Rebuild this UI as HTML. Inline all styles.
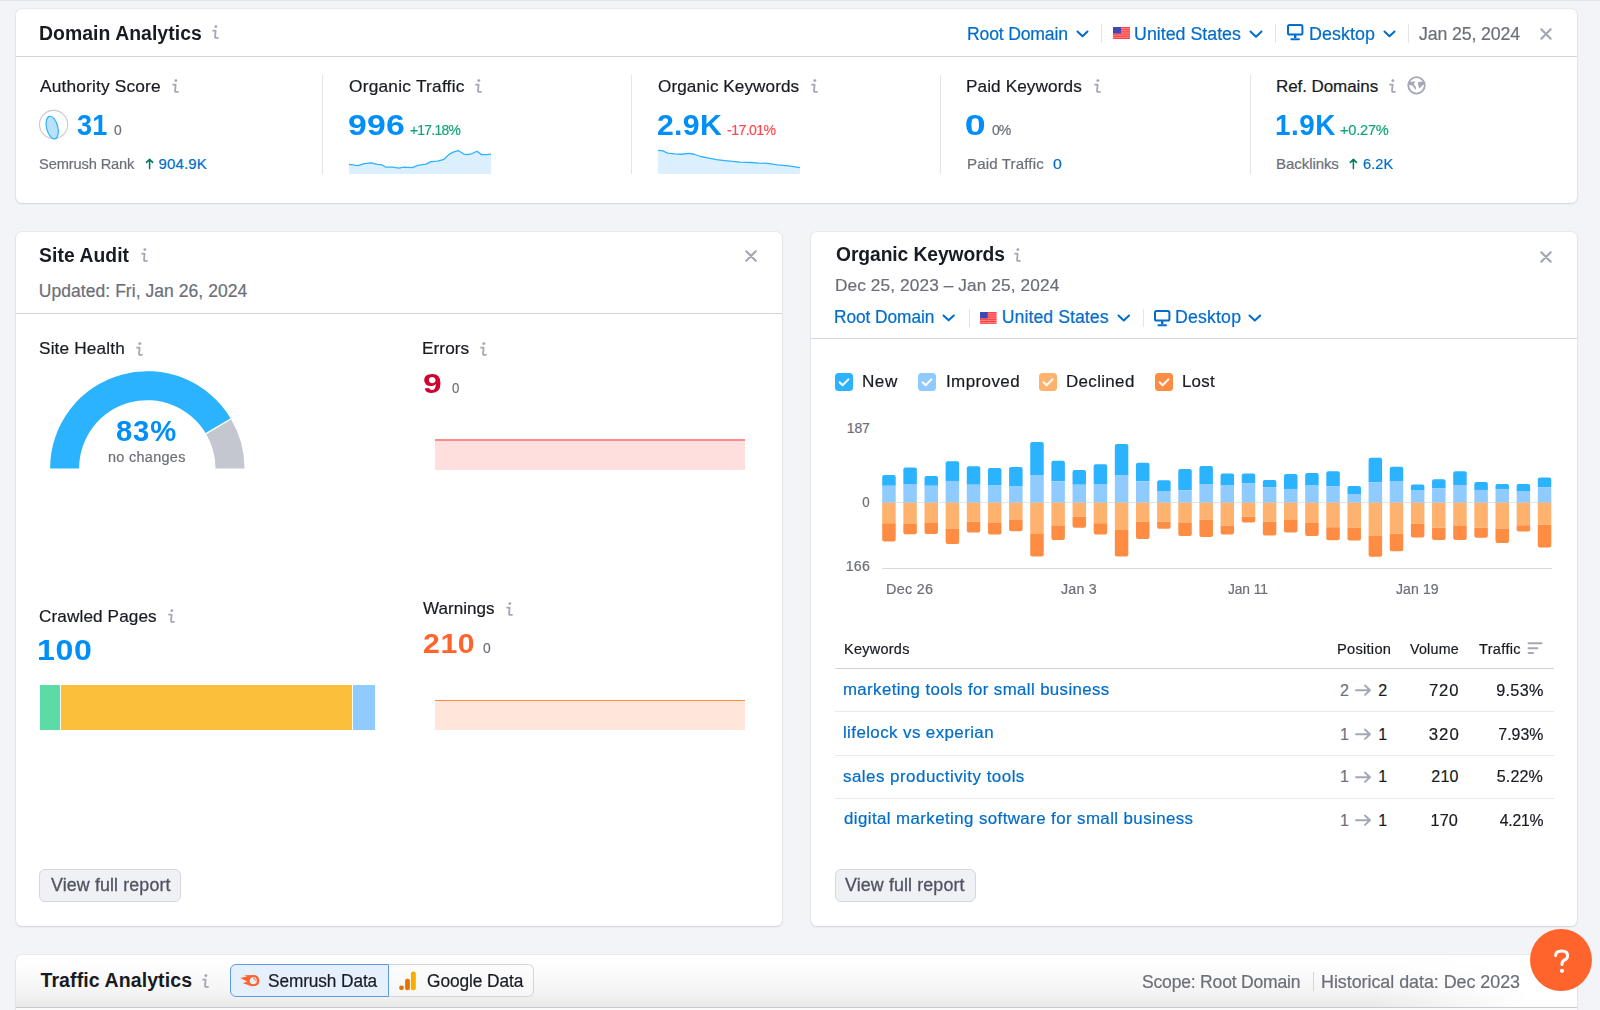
<!DOCTYPE html>
<html><head><meta charset="utf-8"><style>
html,body{margin:0;padding:0;}
body{width:1600px;height:1010px;overflow:hidden;background:#f3f4f8;position:relative;font-family:"Liberation Sans",sans-serif;}
.t{position:absolute;white-space:pre;line-height:40px;-webkit-text-stroke:0.2px currentColor;}
.t[style*=bold]{-webkit-text-stroke:0;}
.a{position:absolute;}
.card{position:absolute;background:#fff;border-radius:6px;box-shadow:0 0 0 1px rgba(30,35,60,0.04),0 1px 2px rgba(30,35,60,0.12);}
.hl{position:absolute;height:1px;background:#d6d8df;}
.vl{position:absolute;width:1px;background:#e3e4ea;}
svg{position:absolute;overflow:visible;}
</style></head><body>
<div class="a" style="left:0;top:0;width:1600px;height:1px;background:#e2e3e8"></div>
<div class="card" style="left:16px;top:9px;width:1561px;height:194px;"></div>
<div class="card" style="left:16px;top:232px;width:766px;height:694px;"></div>
<div class="card" style="left:811px;top:232px;width:766px;height:694px;"></div>
<div class="card" style="left:16px;top:955px;width:1561px;height:55px;border-radius:6px 6px 0 0;"></div>
<div class="a" style="left:16px;top:955px;width:1561px;height:52px;border-radius:6px 6px 0 0;background:linear-gradient(rgba(0,0,0,0) 0%,rgba(0,0,0,0.008) 25%,rgba(0,0,0,0.045) 70%,rgba(0,0,0,0.085) 100%);-webkit-mask-image:linear-gradient(to right,#000 0%,#000 87%,transparent 97%);"></div>
<div class="a" style="left:16px;top:1007px;width:1561px;height:1px;background:#c9cad1"></div>
<div class="a" style="left:16px;top:1008px;width:1561px;height:2px;background:#fbfbfc"></div>
<div class="hl" style="left:16px;width:1561px;top:56px;height:1px;background:#d3d5dc"></div>
<svg style="left:211px;top:24px" width="10" height="16" viewBox="0 0 10 16"><circle cx="4.85" cy="2.6" r="1.45" fill="#a4a7b5"/><path d="M2.1 6.7H4.6L4.05 12.8Q4.0 13.8 4.9 13.8H7.0" fill="none" stroke="#a4a7b5" stroke-width="1.8" stroke-linecap="round" stroke-linejoin="round"/></svg>
<svg style="left:1075px;top:28.75px" width="15" height="9.5"><path d="M2.5 2.5L7.5 7.2L12.5 2.5" fill="none" stroke="#006dca" stroke-width="2" stroke-linecap="round" stroke-linejoin="round"/></svg>
<div class="vl" style="left:1101px;top:24px;height:19px;background:#e3e4ea"></div>
<svg style="left:1113px;top:27px" width="17" height="12"><rect width="17" height="12" fill="#ff8a8a"/><rect x="0" y="0.00" width="17" height="0.92" fill="#ff3b3b"/><rect x="0" y="1.85" width="17" height="0.92" fill="#ff3b3b"/><rect x="0" y="3.69" width="17" height="0.92" fill="#ff3b3b"/><rect x="0" y="5.54" width="17" height="0.92" fill="#ff3b3b"/><rect x="0" y="7.38" width="17" height="0.92" fill="#ff3b3b"/><rect x="0" y="9.23" width="17" height="0.92" fill="#ff3b3b"/><rect x="0" y="11.08" width="17" height="0.92" fill="#ff3b3b"/><rect width="7.99" height="6.48" fill="#4048b8"/></svg>
<svg style="left:1248px;top:28.5px" width="16" height="10.0"><path d="M2.5 2.5L8.0 7.7L13.5 2.5" fill="none" stroke="#006dca" stroke-width="2" stroke-linecap="round" stroke-linejoin="round"/></svg>
<div class="vl" style="left:1275px;top:24px;height:19px;background:#e3e4ea"></div>
<svg style="left:1287px;top:24px" width="17" height="17" viewBox="0 0 17 17"><rect x="1" y="1" width="14.4" height="9.6" rx="1.6" fill="none" stroke="#006dca" stroke-width="2"/><rect x="7" y="11" width="2.4" height="3" fill="#006dca"/><path d="M4.4 15.2H12" stroke="#006dca" stroke-width="1.9" stroke-linecap="round"/></svg>
<svg style="left:1382px;top:28.75px" width="15" height="9.5"><path d="M2.5 2.5L7.5 7.2L12.5 2.5" fill="none" stroke="#006dca" stroke-width="2" stroke-linecap="round" stroke-linejoin="round"/></svg>
<div class="vl" style="left:1408px;top:24px;height:19px;background:#e3e4ea"></div>
<svg style="left:1539px;top:26.5px" width="14" height="14"><path d="M2.3 2.3L11.7 11.7M11.7 2.3L2.3 11.7" stroke="#a4a7b5" stroke-width="2.2" stroke-linecap="round"/></svg>
<div class="vl" style="left:322px;top:75px;height:99px;background:#e3e4ea"></div>
<div class="vl" style="left:631px;top:75px;height:99px;background:#e3e4ea"></div>
<div class="vl" style="left:940px;top:75px;height:99px;background:#e3e4ea"></div>
<div class="vl" style="left:1250px;top:75px;height:99px;background:#e3e4ea"></div>
<svg style="left:170.6px;top:78px" width="10" height="16" viewBox="0 0 10 16"><circle cx="4.85" cy="2.6" r="1.45" fill="#a4a7b5"/><path d="M2.1 6.7H4.6L4.05 12.8Q4.0 13.8 4.9 13.8H7.0" fill="none" stroke="#a4a7b5" stroke-width="1.8" stroke-linecap="round" stroke-linejoin="round"/></svg>
<svg style="left:474px;top:78px" width="10" height="16" viewBox="0 0 10 16"><circle cx="4.85" cy="2.6" r="1.45" fill="#a4a7b5"/><path d="M2.1 6.7H4.6L4.05 12.8Q4.0 13.8 4.9 13.8H7.0" fill="none" stroke="#a4a7b5" stroke-width="1.8" stroke-linecap="round" stroke-linejoin="round"/></svg>
<svg style="left:810px;top:78px" width="10" height="16" viewBox="0 0 10 16"><circle cx="4.85" cy="2.6" r="1.45" fill="#a4a7b5"/><path d="M2.1 6.7H4.6L4.05 12.8Q4.0 13.8 4.9 13.8H7.0" fill="none" stroke="#a4a7b5" stroke-width="1.8" stroke-linecap="round" stroke-linejoin="round"/></svg>
<svg style="left:1092.5px;top:78px" width="10" height="16" viewBox="0 0 10 16"><circle cx="4.85" cy="2.6" r="1.45" fill="#a4a7b5"/><path d="M2.1 6.7H4.6L4.05 12.8Q4.0 13.8 4.9 13.8H7.0" fill="none" stroke="#a4a7b5" stroke-width="1.8" stroke-linecap="round" stroke-linejoin="round"/></svg>
<svg style="left:1388.4px;top:78px" width="10" height="16" viewBox="0 0 10 16"><circle cx="4.85" cy="2.6" r="1.45" fill="#a4a7b5"/><path d="M2.1 6.7H4.6L4.05 12.8Q4.0 13.8 4.9 13.8H7.0" fill="none" stroke="#a4a7b5" stroke-width="1.8" stroke-linecap="round" stroke-linejoin="round"/></svg>
<svg style="left:38px;top:109px" width="32" height="32" viewBox="0 0 32 32"><circle cx="15.6" cy="15.5" r="14.1" fill="none" stroke="#c8cad2" stroke-width="1.1"/><ellipse cx="14.2" cy="18.6" rx="5.6" ry="11.6" transform="rotate(-14 14.2 18.6)" fill="#b9e1fd" stroke="#2bb3ff" stroke-width="1.2"/></svg>
<svg style="left:1406px;top:75px" width="21" height="21" viewBox="0 0 21 21"><circle cx="10.5" cy="10.35" r="8.25" fill="none" stroke="#a4a7b5" stroke-width="1.8"/><path d="M2.5 6.9L9.6 6.2Q7.3 8.8 8.3 10.1Q10.9 12.4 9.6 15Q7.8 12.4 6.3 10.6Q4.7 9.7 2.5 10Z" fill="#a4a7b5"/><path d="M12.2 6.9L18.6 6.2L18.9 9.3Q17.2 9.4 15.8 10.9Q14.6 12.2 13.7 13.2Q11.6 11.2 12.2 6.9Z" fill="#a4a7b5"/></svg>
<svg style="left:0;top:0" width="1600" height="1010"><path d="M149.6 168.6V159.8M146.5 162.4L149.6 159.4L152.7 162.4" fill="none" stroke="#047a5f" stroke-width="1.55" stroke-linecap="round" stroke-linejoin="round"/></svg>
<svg style="left:0;top:0" width="1600" height="1010"><path d="M1353.4 168.6V159.8M1350.3000000000002 162.4L1353.4 159.4L1356.5 162.4" fill="none" stroke="#047a5f" stroke-width="1.55" stroke-linecap="round" stroke-linejoin="round"/></svg>
<svg style="left:0;top:0" width="1600" height="1010"><path d="M349.00 164.38 L357.81 165.69 L364.38 163.63 L370.94 162.88 L377.50 164.38 L382.19 164.94 L385.94 167.19 L392.50 167.19 L399.07 168.13 L403.75 167.19 L412.19 167.57 L417.82 165.32 L426.26 164.19 L430.94 161.57 L437.51 161.19 L444.07 159.32 L448.76 154.63 L452.51 152.38 L458.13 150.51 L463.76 154.07 L467.51 154.63 L472.20 153.51 L476.88 151.26 L481.57 154.63 L486.26 154.63 L490.95 154.07 L490.95 174 L349.00 174 Z" fill="#dcefff"/><path d="M349.00 164.38 L357.81 165.69 L364.38 163.63 L370.94 162.88 L377.50 164.38 L382.19 164.94 L385.94 167.19 L392.50 167.19 L399.07 168.13 L403.75 167.19 L412.19 167.57 L417.82 165.32 L426.26 164.19 L430.94 161.57 L437.51 161.19 L444.07 159.32 L448.76 154.63 L452.51 152.38 L458.13 150.51 L463.76 154.07 L467.51 154.63 L472.20 153.51 L476.88 151.26 L481.57 154.63 L486.26 154.63 L490.95 154.07" fill="none" stroke="#2bb3ff" stroke-width="1.3" stroke-linejoin="round"/></svg>
<svg style="left:0;top:0" width="1600" height="1010"><path d="M657.88 150.32 L662.19 150.69 L667.81 153.13 L674.38 153.88 L680.94 154.26 L689.38 153.32 L694.07 154.26 L700.63 156.51 L706.25 157.63 L716.57 159.69 L725.00 160.63 L740.01 162.13 L751.26 162.51 L758.76 163.07 L767.19 163.44 L777.51 164.94 L788.76 165.88 L800.01 167.57 L800.01 174 L657.88 174 Z" fill="#dcefff"/><path d="M657.88 150.32 L662.19 150.69 L667.81 153.13 L674.38 153.88 L680.94 154.26 L689.38 153.32 L694.07 154.26 L700.63 156.51 L706.25 157.63 L716.57 159.69 L725.00 160.63 L740.01 162.13 L751.26 162.51 L758.76 163.07 L767.19 163.44 L777.51 164.94 L788.76 165.88 L800.01 167.57" fill="none" stroke="#2bb3ff" stroke-width="1.3" stroke-linejoin="round"/></svg>
<svg style="left:140px;top:247px" width="10" height="16" viewBox="0 0 10 16"><circle cx="4.85" cy="2.6" r="1.45" fill="#a4a7b5"/><path d="M2.1 6.7H4.6L4.05 12.8Q4.0 13.8 4.9 13.8H7.0" fill="none" stroke="#a4a7b5" stroke-width="1.8" stroke-linecap="round" stroke-linejoin="round"/></svg>
<svg style="left:743.6px;top:249.2px" width="14" height="14"><path d="M2.3 2.3L11.7 11.7M11.7 2.3L2.3 11.7" stroke="#a4a7b5" stroke-width="2.2" stroke-linecap="round"/></svg>
<div class="hl" style="left:16px;width:766px;top:313px;height:1px;background:#d3d5dc"></div>
<svg style="left:134.7px;top:341px" width="10" height="16" viewBox="0 0 10 16"><circle cx="4.85" cy="2.6" r="1.45" fill="#a4a7b5"/><path d="M2.1 6.7H4.6L4.05 12.8Q4.0 13.8 4.9 13.8H7.0" fill="none" stroke="#a4a7b5" stroke-width="1.8" stroke-linecap="round" stroke-linejoin="round"/></svg>
<svg style="left:479.2px;top:341px" width="10" height="16" viewBox="0 0 10 16"><circle cx="4.85" cy="2.6" r="1.45" fill="#a4a7b5"/><path d="M2.1 6.7H4.6L4.05 12.8Q4.0 13.8 4.9 13.8H7.0" fill="none" stroke="#a4a7b5" stroke-width="1.8" stroke-linecap="round" stroke-linejoin="round"/></svg>
<svg style="left:0;top:0" width="1600" height="1010"><path d="M50.10 468.40 A97.2 97.2 0 0 1 230.96 418.92 L206.00 433.68 A68.2 68.2 0 0 0 79.10 468.40 Z" fill="#2bb3ff"/><path d="M230.96 418.92 A97.2 97.2 0 0 1 244.50 468.40 L215.50 468.40 A68.2 68.2 0 0 0 206.00 433.68 Z" fill="#c4c7cf"/><path d="M204.28 434.70 L232.69 417.90" stroke="#fff" stroke-width="1.4"/></svg>
<div class="a" style="left:435px;top:440px;width:310px;height:30px;background:#ffdede"></div>
<div class="a" style="left:435px;top:439px;width:310px;height:2px;background:#ff8a8a"></div>
<svg style="left:166.7px;top:608px" width="10" height="16" viewBox="0 0 10 16"><circle cx="4.85" cy="2.6" r="1.45" fill="#a4a7b5"/><path d="M2.1 6.7H4.6L4.05 12.8Q4.0 13.8 4.9 13.8H7.0" fill="none" stroke="#a4a7b5" stroke-width="1.8" stroke-linecap="round" stroke-linejoin="round"/></svg>
<svg style="left:505.3px;top:601px" width="10" height="16" viewBox="0 0 10 16"><circle cx="4.85" cy="2.6" r="1.45" fill="#a4a7b5"/><path d="M2.1 6.7H4.6L4.05 12.8Q4.0 13.8 4.9 13.8H7.0" fill="none" stroke="#a4a7b5" stroke-width="1.8" stroke-linecap="round" stroke-linejoin="round"/></svg>
<div class="a" style="left:39.5px;top:685px;width:20.3px;height:45px;background:#5bdba6"></div>
<div class="a" style="left:60.5px;top:685px;width:291.5px;height:45px;background:#fcbf3c"></div>
<div class="a" style="left:353px;top:685px;width:22px;height:45px;background:#8fcbff"></div>
<div class="a" style="left:435px;top:701px;width:310px;height:29px;background:#ffe5da"></div>
<div class="a" style="left:435px;top:700px;width:310px;height:1.3px;background:#ff8c43"></div>
<div class="a" style="left:39.4px;top:869.4px;width:139.2px;height:30.899999999999977px;background:#f0f1f5;border:1px solid #d5d7de;border-radius:6px"></div>
<svg style="left:1013px;top:247px" width="10" height="16" viewBox="0 0 10 16"><circle cx="4.85" cy="2.6" r="1.45" fill="#a4a7b5"/><path d="M2.1 6.7H4.6L4.05 12.8Q4.0 13.8 4.9 13.8H7.0" fill="none" stroke="#a4a7b5" stroke-width="1.8" stroke-linecap="round" stroke-linejoin="round"/></svg>
<svg style="left:1539px;top:249.5px" width="14" height="14"><path d="M2.3 2.3L11.7 11.7M11.7 2.3L2.3 11.7" stroke="#a4a7b5" stroke-width="2.2" stroke-linecap="round"/></svg>
<svg style="left:941.3px;top:313.475px" width="15.300000000000068" height="9.650000000000034"><path d="M2.5 2.5L7.650000000000034 7.350000000000034L12.800000000000068 2.5" fill="none" stroke="#006dca" stroke-width="2" stroke-linecap="round" stroke-linejoin="round"/></svg>
<div class="vl" style="left:968.5px;top:309px;height:18px;background:#e3e4ea"></div>
<svg style="left:979.7px;top:312px" width="16.5" height="11.7"><rect width="16.5" height="11.7" fill="#ff8a8a"/><rect x="0" y="0.00" width="16.5" height="0.90" fill="#ff3b3b"/><rect x="0" y="1.80" width="16.5" height="0.90" fill="#ff3b3b"/><rect x="0" y="3.60" width="16.5" height="0.90" fill="#ff3b3b"/><rect x="0" y="5.40" width="16.5" height="0.90" fill="#ff3b3b"/><rect x="0" y="7.20" width="16.5" height="0.90" fill="#ff3b3b"/><rect x="0" y="9.00" width="16.5" height="0.90" fill="#ff3b3b"/><rect x="0" y="10.80" width="16.5" height="0.90" fill="#ff3b3b"/><rect width="7.75" height="6.32" fill="#4048b8"/></svg>
<svg style="left:1115.6px;top:313.4px" width="15.600000000000136" height="9.800000000000068"><path d="M2.5 2.5L7.800000000000068 7.500000000000068L13.100000000000136 2.5" fill="none" stroke="#006dca" stroke-width="2" stroke-linecap="round" stroke-linejoin="round"/></svg>
<div class="vl" style="left:1142.5px;top:309px;height:18px;background:#e3e4ea"></div>
<svg style="left:1153.5px;top:309.5px" width="17" height="17" viewBox="0 0 17 17"><rect x="1" y="1" width="14.4" height="9.6" rx="1.6" fill="none" stroke="#006dca" stroke-width="2"/><rect x="7" y="11" width="2.4" height="3" fill="#006dca"/><path d="M4.4 15.2H12" stroke="#006dca" stroke-width="1.9" stroke-linecap="round"/></svg>
<svg style="left:1247.4px;top:313.37500000000006px" width="15.699999999999818" height="9.849999999999909"><path d="M2.5 2.5L7.849999999999909 7.549999999999909L13.199999999999818 2.5" fill="none" stroke="#006dca" stroke-width="2" stroke-linecap="round" stroke-linejoin="round"/></svg>
<div class="hl" style="left:811px;width:766px;top:338px;height:1px;background:#d3d5dc"></div>
<svg style="left:835px;top:373px" width="18" height="18"><rect x="0" y="0" width="18" height="18" rx="3.5" fill="#2bb3ff"/><path d="M4.6 9.3L7.6 12.2L13.4 6.4" fill="none" stroke="#fff" stroke-width="2" stroke-linecap="round" stroke-linejoin="round"/></svg>
<svg style="left:918px;top:373px" width="18" height="18"><rect x="0" y="0" width="18" height="18" rx="3.5" fill="#8fcbff"/><path d="M4.6 9.3L7.6 12.2L13.4 6.4" fill="none" stroke="#fff" stroke-width="2" stroke-linecap="round" stroke-linejoin="round"/></svg>
<svg style="left:1038.5px;top:373px" width="18" height="18"><rect x="0" y="0" width="18" height="18" rx="3.5" fill="#ffb26e"/><path d="M4.6 9.3L7.6 12.2L13.4 6.4" fill="none" stroke="#fff" stroke-width="2" stroke-linecap="round" stroke-linejoin="round"/></svg>
<svg style="left:1154.5px;top:373px" width="18" height="18"><rect x="0" y="0" width="18" height="18" rx="3.5" fill="#ff8c43"/><path d="M4.6 9.3L7.6 12.2L13.4 6.4" fill="none" stroke="#fff" stroke-width="2" stroke-linecap="round" stroke-linejoin="round"/></svg>
<div class="hl" style="left:882px;width:669.5px;top:502px;height:1.3px;background:#e4e5ea"></div>
<div class="hl" style="left:882px;width:669.5px;top:567.5px;height:1.5px;background:#d9dae1"></div>
<svg style="left:0;top:0" width="1600" height="1010"><path d="M882.20 485.80V477.00Q882.20 475.00 884.20 475.00H893.70Q895.70 475.00 895.70 477.00V485.80Z" fill="#2bb3ff"/><rect x="882.20" y="485.80" width="13.5" height="16.90" fill="#8fcbff"/><rect x="882.20" y="502.70" width="13.5" height="20.60" fill="#ffb26e"/><path d="M882.20 523.30V539.50Q882.20 541.50 884.20 541.50H893.70Q895.70 541.50 895.70 539.50V523.30Z" fill="#ff8c43"/><path d="M903.35 484.00V469.40Q903.35 467.40 905.35 467.40H914.85Q916.85 467.40 916.85 469.40V484.00Z" fill="#2bb3ff"/><rect x="903.35" y="484.00" width="13.5" height="18.70" fill="#8fcbff"/><rect x="903.35" y="502.70" width="13.5" height="21.10" fill="#ffb26e"/><path d="M903.35 523.80V532.20Q903.35 534.20 905.35 534.20H914.85Q916.85 534.20 916.85 532.20V523.80Z" fill="#ff8c43"/><path d="M924.50 485.80V478.00Q924.50 476.00 926.50 476.00H936.00Q938.00 476.00 938.00 478.00V485.80Z" fill="#2bb3ff"/><rect x="924.50" y="485.80" width="13.5" height="16.90" fill="#8fcbff"/><rect x="924.50" y="502.70" width="13.5" height="19.90" fill="#ffb26e"/><path d="M924.50 522.60V531.90Q924.50 533.90 926.50 533.90H936.00Q938.00 533.90 938.00 531.90V522.60Z" fill="#ff8c43"/><path d="M945.64 480.90V463.20Q945.64 461.20 947.64 461.20H957.14Q959.14 461.20 959.14 463.20V480.90Z" fill="#2bb3ff"/><rect x="945.64" y="480.90" width="13.5" height="21.80" fill="#8fcbff"/><rect x="945.64" y="502.70" width="13.5" height="26.10" fill="#ffb26e"/><path d="M945.64 528.80V541.90Q945.64 543.90 947.64 543.90H957.14Q959.14 543.90 959.14 541.90V528.80Z" fill="#ff8c43"/><path d="M966.79 484.70V468.30Q966.79 466.30 968.79 466.30H978.29Q980.29 466.30 980.29 468.30V484.70Z" fill="#2bb3ff"/><rect x="966.79" y="484.70" width="13.5" height="18.00" fill="#8fcbff"/><rect x="966.79" y="502.70" width="13.5" height="19.00" fill="#ffb26e"/><path d="M966.79 521.70V530.50Q966.79 532.50 968.79 532.50H978.29Q980.29 532.50 980.29 530.50V521.70Z" fill="#ff8c43"/><path d="M987.94 485.10V470.10Q987.94 468.10 989.94 468.10H999.44Q1001.44 468.10 1001.44 470.10V485.10Z" fill="#2bb3ff"/><rect x="987.94" y="485.10" width="13.5" height="17.60" fill="#8fcbff"/><rect x="987.94" y="502.70" width="13.5" height="20.10" fill="#ffb26e"/><path d="M987.94 522.80V532.60Q987.94 534.60 989.94 534.60H999.44Q1001.44 534.60 1001.44 532.60V522.80Z" fill="#ff8c43"/><path d="M1009.09 486.50V469.00Q1009.09 467.00 1011.09 467.00H1020.59Q1022.59 467.00 1022.59 469.00V486.50Z" fill="#2bb3ff"/><rect x="1009.09" y="486.50" width="13.5" height="16.20" fill="#8fcbff"/><rect x="1009.09" y="502.70" width="13.5" height="17.10" fill="#ffb26e"/><path d="M1009.09 519.80V529.20Q1009.09 531.20 1011.09 531.20H1020.59Q1022.59 531.20 1022.59 529.20V519.80Z" fill="#ff8c43"/><path d="M1030.24 475.40V444.00Q1030.24 442.00 1032.24 442.00H1041.74Q1043.74 442.00 1043.74 444.00V475.40Z" fill="#2bb3ff"/><rect x="1030.24" y="475.40" width="13.5" height="27.30" fill="#8fcbff"/><rect x="1030.24" y="502.70" width="13.5" height="30.90" fill="#ffb26e"/><path d="M1030.24 533.60V554.40Q1030.24 556.40 1032.24 556.40H1041.74Q1043.74 556.40 1043.74 554.40V533.60Z" fill="#ff8c43"/><path d="M1051.38 481.30V462.80Q1051.38 460.80 1053.38 460.80H1062.88Q1064.88 460.80 1064.88 462.80V481.30Z" fill="#2bb3ff"/><rect x="1051.38" y="481.30" width="13.5" height="21.40" fill="#8fcbff"/><rect x="1051.38" y="502.70" width="13.5" height="22.90" fill="#ffb26e"/><path d="M1051.38 525.60V537.90Q1051.38 539.90 1053.38 539.90H1062.88Q1064.88 539.90 1064.88 537.90V525.60Z" fill="#ff8c43"/><path d="M1072.53 484.70V471.90Q1072.53 469.90 1074.53 469.90H1084.03Q1086.03 469.90 1086.03 471.90V484.70Z" fill="#2bb3ff"/><rect x="1072.53" y="484.70" width="13.5" height="18.00" fill="#8fcbff"/><rect x="1072.53" y="502.70" width="13.5" height="14.20" fill="#ffb26e"/><path d="M1072.53 516.90V525.70Q1072.53 527.70 1074.53 527.70H1084.03Q1086.03 527.70 1086.03 525.70V516.90Z" fill="#ff8c43"/><path d="M1093.68 484.00V466.20Q1093.68 464.20 1095.68 464.20H1105.18Q1107.18 464.20 1107.18 466.20V484.00Z" fill="#2bb3ff"/><rect x="1093.68" y="484.00" width="13.5" height="18.70" fill="#8fcbff"/><rect x="1093.68" y="502.70" width="13.5" height="20.60" fill="#ffb26e"/><path d="M1093.68 523.30V532.60Q1093.68 534.60 1095.68 534.60H1105.18Q1107.18 534.60 1107.18 532.60V523.30Z" fill="#ff8c43"/><path d="M1114.83 475.40V445.90Q1114.83 443.90 1116.83 443.90H1126.33Q1128.33 443.90 1128.33 445.90V475.40Z" fill="#2bb3ff"/><rect x="1114.83" y="475.40" width="13.5" height="27.30" fill="#8fcbff"/><rect x="1114.83" y="502.70" width="13.5" height="27.30" fill="#ffb26e"/><path d="M1114.83 530.00V554.40Q1114.83 556.40 1116.83 556.40H1126.33Q1128.33 556.40 1128.33 554.40V530.00Z" fill="#ff8c43"/><path d="M1135.98 481.30V464.80Q1135.98 462.80 1137.98 462.80H1147.48Q1149.48 462.80 1149.48 464.80V481.30Z" fill="#2bb3ff"/><rect x="1135.98" y="481.30" width="13.5" height="21.40" fill="#8fcbff"/><rect x="1135.98" y="502.70" width="13.5" height="19.20" fill="#ffb26e"/><path d="M1135.98 521.90V537.00Q1135.98 539.00 1137.98 539.00H1147.48Q1149.48 539.00 1149.48 537.00V521.90Z" fill="#ff8c43"/><path d="M1157.12 491.00V482.30Q1157.12 480.30 1159.12 480.30H1168.62Q1170.62 480.30 1170.62 482.30V491.00Z" fill="#2bb3ff"/><rect x="1157.12" y="491.00" width="13.5" height="11.70" fill="#8fcbff"/><rect x="1157.12" y="502.70" width="13.5" height="19.00" fill="#ffb26e"/><path d="M1157.12 521.70V526.70Q1157.12 528.70 1159.12 528.70H1168.62Q1170.62 528.70 1170.62 526.70V521.70Z" fill="#ff8c43"/><path d="M1178.27 490.30V471.10Q1178.27 469.10 1180.27 469.10H1189.77Q1191.77 469.10 1191.77 471.10V490.30Z" fill="#2bb3ff"/><rect x="1178.27" y="490.30" width="13.5" height="12.40" fill="#8fcbff"/><rect x="1178.27" y="502.70" width="13.5" height="20.40" fill="#ffb26e"/><path d="M1178.27 523.10V534.00Q1178.27 536.00 1180.27 536.00H1189.77Q1191.77 536.00 1191.77 534.00V523.10Z" fill="#ff8c43"/><path d="M1199.42 484.00V468.00Q1199.42 466.00 1201.42 466.00H1210.92Q1212.92 466.00 1212.92 468.00V484.00Z" fill="#2bb3ff"/><rect x="1199.42" y="484.00" width="13.5" height="18.70" fill="#8fcbff"/><rect x="1199.42" y="502.70" width="13.5" height="16.70" fill="#ffb26e"/><path d="M1199.42 519.40V535.00Q1199.42 537.00 1201.42 537.00H1210.92Q1212.92 537.00 1212.92 535.00V519.40Z" fill="#ff8c43"/><path d="M1220.57 485.40V475.40Q1220.57 473.40 1222.57 473.40H1232.07Q1234.07 473.40 1234.07 475.40V485.40Z" fill="#2bb3ff"/><rect x="1220.57" y="485.40" width="13.5" height="17.30" fill="#8fcbff"/><rect x="1220.57" y="502.70" width="13.5" height="23.20" fill="#ffb26e"/><path d="M1220.57 525.90V532.60Q1220.57 534.60 1222.57 534.60H1232.07Q1234.07 534.60 1234.07 532.60V525.90Z" fill="#ff8c43"/><path d="M1241.72 483.10V475.40Q1241.72 473.40 1243.72 473.40H1253.22Q1255.22 473.40 1255.22 475.40V483.10Z" fill="#2bb3ff"/><rect x="1241.72" y="483.10" width="13.5" height="19.60" fill="#8fcbff"/><rect x="1241.72" y="502.70" width="13.5" height="14.20" fill="#ffb26e"/><path d="M1241.72 516.90V520.60Q1241.72 522.60 1243.72 522.60H1253.22Q1255.22 522.60 1255.22 520.60V516.90Z" fill="#ff8c43"/><path d="M1262.86 487.10V481.90Q1262.86 479.90 1264.86 479.90H1274.36Q1276.36 479.90 1276.36 481.90V487.10Z" fill="#2bb3ff"/><rect x="1262.86" y="487.10" width="13.5" height="15.60" fill="#8fcbff"/><rect x="1262.86" y="502.70" width="13.5" height="19.00" fill="#ffb26e"/><path d="M1262.86 521.70V533.60Q1262.86 535.60 1264.86 535.60H1274.36Q1276.36 535.60 1276.36 533.60V521.70Z" fill="#ff8c43"/><path d="M1284.01 488.90V475.90Q1284.01 473.90 1286.01 473.90H1295.51Q1297.51 473.90 1297.51 475.90V488.90Z" fill="#2bb3ff"/><rect x="1284.01" y="488.90" width="13.5" height="13.80" fill="#8fcbff"/><rect x="1284.01" y="502.70" width="13.5" height="17.40" fill="#ffb26e"/><path d="M1284.01 520.10V530.50Q1284.01 532.50 1286.01 532.50H1295.51Q1297.51 532.50 1297.51 530.50V520.10Z" fill="#ff8c43"/><path d="M1305.16 485.40V475.00Q1305.16 473.00 1307.16 473.00H1316.66Q1318.66 473.00 1318.66 475.00V485.40Z" fill="#2bb3ff"/><rect x="1305.16" y="485.40" width="13.5" height="17.30" fill="#8fcbff"/><rect x="1305.16" y="502.70" width="13.5" height="20.10" fill="#ffb26e"/><path d="M1305.16 522.80V534.00Q1305.16 536.00 1307.16 536.00H1316.66Q1318.66 536.00 1318.66 534.00V522.80Z" fill="#ff8c43"/><path d="M1326.31 486.10V473.30Q1326.31 471.30 1328.31 471.30H1337.81Q1339.81 471.30 1339.81 473.30V486.10Z" fill="#2bb3ff"/><rect x="1326.31" y="486.10" width="13.5" height="16.60" fill="#8fcbff"/><rect x="1326.31" y="502.70" width="13.5" height="24.60" fill="#ffb26e"/><path d="M1326.31 527.30V538.20Q1326.31 540.20 1328.31 540.20H1337.81Q1339.81 540.20 1339.81 538.20V527.30Z" fill="#ff8c43"/><path d="M1347.46 494.00V488.10Q1347.46 486.10 1349.46 486.10H1358.96Q1360.96 486.10 1360.96 488.10V494.00Z" fill="#2bb3ff"/><rect x="1347.46" y="494.00" width="13.5" height="8.70" fill="#8fcbff"/><rect x="1347.46" y="502.70" width="13.5" height="24.70" fill="#ffb26e"/><path d="M1347.46 527.40V538.40Q1347.46 540.40 1349.46 540.40H1358.96Q1360.96 540.40 1360.96 538.40V527.40Z" fill="#ff8c43"/><path d="M1368.60 482.20V459.70Q1368.60 457.70 1370.60 457.70H1380.10Q1382.10 457.70 1382.10 459.70V482.20Z" fill="#2bb3ff"/><rect x="1368.60" y="482.20" width="13.5" height="20.50" fill="#8fcbff"/><rect x="1368.60" y="502.70" width="13.5" height="33.30" fill="#ffb26e"/><path d="M1368.60 536.00V554.80Q1368.60 556.80 1370.60 556.80H1380.10Q1382.10 556.80 1382.10 554.80V536.00Z" fill="#ff8c43"/><path d="M1389.75 481.00V468.70Q1389.75 466.70 1391.75 466.70H1401.25Q1403.25 466.70 1403.25 468.70V481.00Z" fill="#2bb3ff"/><rect x="1389.75" y="481.00" width="13.5" height="21.70" fill="#8fcbff"/><rect x="1389.75" y="502.70" width="13.5" height="31.20" fill="#ffb26e"/><path d="M1389.75 533.90V549.20Q1389.75 551.20 1391.75 551.20H1401.25Q1403.25 551.20 1403.25 549.20V533.90Z" fill="#ff8c43"/><path d="M1410.90 490.00V486.50Q1410.90 484.50 1412.90 484.50H1422.40Q1424.40 484.50 1424.40 486.50V490.00Z" fill="#2bb3ff"/><rect x="1410.90" y="490.00" width="13.5" height="12.70" fill="#8fcbff"/><rect x="1410.90" y="502.70" width="13.5" height="21.20" fill="#ffb26e"/><path d="M1410.90 523.90V535.40Q1410.90 537.40 1412.90 537.40H1422.40Q1424.40 537.40 1424.40 535.40V523.90Z" fill="#ff8c43"/><path d="M1432.05 488.20V481.20Q1432.05 479.20 1434.05 479.20H1443.55Q1445.55 479.20 1445.55 481.20V488.20Z" fill="#2bb3ff"/><rect x="1432.05" y="488.20" width="13.5" height="14.50" fill="#8fcbff"/><rect x="1432.05" y="502.70" width="13.5" height="25.00" fill="#ffb26e"/><path d="M1432.05 527.70V537.90Q1432.05 539.90 1434.05 539.90H1443.55Q1445.55 539.90 1445.55 537.90V527.70Z" fill="#ff8c43"/><path d="M1453.20 485.00V473.30Q1453.20 471.30 1455.20 471.30H1464.70Q1466.70 471.30 1466.70 473.30V485.00Z" fill="#2bb3ff"/><rect x="1453.20" y="485.00" width="13.5" height="17.70" fill="#8fcbff"/><rect x="1453.20" y="502.70" width="13.5" height="23.30" fill="#ffb26e"/><path d="M1453.20 526.00V537.90Q1453.20 539.90 1455.20 539.90H1464.70Q1466.70 539.90 1466.70 537.90V526.00Z" fill="#ff8c43"/><path d="M1474.34 489.90V484.00Q1474.34 482.00 1476.34 482.00H1485.84Q1487.84 482.00 1487.84 484.00V489.90Z" fill="#2bb3ff"/><rect x="1474.34" y="489.90" width="13.5" height="12.80" fill="#8fcbff"/><rect x="1474.34" y="502.70" width="13.5" height="25.00" fill="#ffb26e"/><path d="M1474.34 527.70V535.80Q1474.34 537.80 1476.34 537.80H1485.84Q1487.84 537.80 1487.84 535.80V527.70Z" fill="#ff8c43"/><path d="M1495.49 488.90V486.00Q1495.49 484.00 1497.49 484.00H1506.99Q1508.99 484.00 1508.99 486.00V488.90Z" fill="#2bb3ff"/><rect x="1495.49" y="488.90" width="13.5" height="13.80" fill="#8fcbff"/><rect x="1495.49" y="502.70" width="13.5" height="26.10" fill="#ffb26e"/><path d="M1495.49 528.80V540.90Q1495.49 542.90 1497.49 542.90H1506.99Q1508.99 542.90 1508.99 540.90V528.80Z" fill="#ff8c43"/><path d="M1516.64 491.00V486.00Q1516.64 484.00 1518.64 484.00H1528.14Q1530.14 484.00 1530.14 486.00V491.00Z" fill="#2bb3ff"/><rect x="1516.64" y="491.00" width="13.5" height="11.70" fill="#8fcbff"/><rect x="1516.64" y="502.70" width="13.5" height="22.50" fill="#ffb26e"/><path d="M1516.64 525.20V529.40Q1516.64 531.40 1518.64 531.40H1528.14Q1530.14 531.40 1530.14 529.40V525.20Z" fill="#ff8c43"/><path d="M1537.79 487.10V479.40Q1537.79 477.40 1539.79 477.40H1549.29Q1551.29 477.40 1551.29 479.40V487.10Z" fill="#2bb3ff"/><rect x="1537.79" y="487.10" width="13.5" height="15.60" fill="#8fcbff"/><rect x="1537.79" y="502.70" width="13.5" height="22.20" fill="#ffb26e"/><path d="M1537.79 524.90V545.50Q1537.79 547.50 1539.79 547.50H1549.29Q1551.29 547.50 1551.29 545.50V524.90Z" fill="#ff8c43"/></svg>
<div class="hl" style="left:835px;width:718.5px;top:668px;height:1px;background:#d3d5dc"></div>
<div class="hl" style="left:835px;width:718.5px;top:711px;height:1px;background:#e9eaee"></div>
<div class="hl" style="left:835px;width:718.5px;top:755px;height:1px;background:#e9eaee"></div>
<div class="hl" style="left:835px;width:718.5px;top:798px;height:1px;background:#e9eaee"></div>
<svg style="left:1527px;top:642px" width="16" height="13"><path d="M1.5 1.3H14.5M1.5 6.2H10.5M1.5 11H6" stroke="#a4a7b5" stroke-width="1.9" stroke-linecap="round"/></svg>
<svg style="left:1355px;top:684.2px" width="17" height="12"><path d="M1 6.2H15M10 1.5L15 6.2L10 10.9" fill="none" stroke="#a4a7b5" stroke-width="1.9" stroke-linecap="round" stroke-linejoin="round"/></svg>
<svg style="left:1355px;top:727.7px" width="17" height="12"><path d="M1 6.2H15M10 1.5L15 6.2L10 10.9" fill="none" stroke="#a4a7b5" stroke-width="1.9" stroke-linecap="round" stroke-linejoin="round"/></svg>
<svg style="left:1355px;top:770.7px" width="17" height="12"><path d="M1 6.2H15M10 1.5L15 6.2L10 10.9" fill="none" stroke="#a4a7b5" stroke-width="1.9" stroke-linecap="round" stroke-linejoin="round"/></svg>
<svg style="left:1355px;top:813.7px" width="17" height="12"><path d="M1 6.2H15M10 1.5L15 6.2L10 10.9" fill="none" stroke="#a4a7b5" stroke-width="1.9" stroke-linecap="round" stroke-linejoin="round"/></svg>
<div class="a" style="left:835.25px;top:869.4px;width:139.0px;height:30.899999999999977px;background:#f0f1f5;border:1px solid #d5d7de;border-radius:6px"></div>
<svg style="left:201px;top:973px" width="10" height="16" viewBox="0 0 10 16"><circle cx="4.85" cy="2.6" r="1.45" fill="#a4a7b5"/><path d="M2.1 6.7H4.6L4.05 12.8Q4.0 13.8 4.9 13.8H7.0" fill="none" stroke="#a4a7b5" stroke-width="1.8" stroke-linecap="round" stroke-linejoin="round"/></svg>
<div class="a" style="left:389px;top:964px;width:143.6px;height:31px;border:1px solid #d3d5dc;border-left:none;border-radius:0 6px 6px 0;background:linear-gradient(#fdfdfd,#f6f6f7)"></div>
<div class="a" style="left:230px;top:964px;width:157px;height:31px;border:1px solid #5a9be3;border-radius:6px 0 0 6px;background:#e6f0fc"></div>
<svg style="left:239px;top:974px" width="22" height="14" viewBox="0 0 22 14"><path d="M5.2 1.2L15 0.95Q20.3 1.4 20.3 6.9Q20.1 12.2 14 12.3Q11 12.3 9.3 11L3.9 9.2L8.1 7.4L1.2 3.9L7.8 2.6Z" fill="#ff642d"/><circle cx="14.3" cy="6.8" r="3.5" fill="#e6f0fc"/><path d="M14.6 4.5Q16.3 4.8 16.8 6.3" stroke="#ff642d" stroke-width="1" fill="none" stroke-linecap="round"/></svg>
<svg style="left:398px;top:970px" width="20" height="22"><circle cx="3.5" cy="17.8" r="2.4" fill="#e37400"/><rect x="7.1" y="8.8" width="4.8" height="11.4" rx="2.2" fill="#e37400"/><rect x="12.9" y="1.5" width="4.9" height="18.7" rx="2.2" fill="#f9ab00"/></svg>
<div class="vl" style="left:1312.5px;top:972px;height:19px;background:#d3d5dc"></div>
<div class="a" style="left:1530px;top:928.5px;width:62px;height:62px;border-radius:50%;background:#ff642d"></div>
<svg style="left:1550px;top:947px" width="24" height="28"><path d="M5.6 8.6Q5.6 4.0 11.6 4.0Q17.6 4.0 17.6 8.8Q17.6 11.6 14.4 13.2Q12 14.4 12 16.6V17.4" fill="none" stroke="#fff" stroke-width="3" stroke-linecap="round"/><circle cx="12" cy="23.8" r="2.1" fill="#fff"/></svg>
<div class="t" style="left:38.71px;top:13px;font-size:19.5px;font-weight:bold;transform:scaleX(0.9957);transform-origin:1.00px 0;color:#191b23;letter-spacing:0.037px;">Domain Analytics</div>
<div class="t" style="left:966.94px;top:14px;font-size:18px;transform:scaleX(0.9777);transform-origin:1.00px 0;color:#006dca;letter-spacing:-0.180px;">Root Domain</div>
<div class="t" style="left:1134.23px;top:14px;font-size:18px;transform:scaleX(0.9903);transform-origin:1.00px 0;color:#006dca;letter-spacing:-0.007px;">United States</div>
<div class="t" style="left:1308.71px;top:14px;font-size:18px;transform:scaleX(0.9921);transform-origin:1.00px 0;color:#006dca;letter-spacing:0.065px;">Desktop</div>
<div class="t" style="left:1418.81px;top:14px;font-size:18px;transform:scaleX(0.9851);transform-origin:0.00px 0;color:#6c6e79;letter-spacing:-0.140px;">Jan 25, 2024</div>
<div class="t" style="left:39.54px;top:67px;font-size:17px;transform:scaleX(1.0202);transform-origin:0.00px 0;color:#191b23;letter-spacing:0.147px;">Authority Score</div>
<div class="t" style="left:348.51px;top:67px;font-size:17px;transform:scaleX(1.0168);transform-origin:0.00px 0;color:#191b23;letter-spacing:0.232px;">Organic Traffic</div>
<div class="t" style="left:657.91px;top:67px;font-size:17px;transform:scaleX(1.0080);transform-origin:0.00px 0;color:#191b23;letter-spacing:0.074px;">Organic Keywords</div>
<div class="t" style="left:966.21px;top:67px;font-size:17px;transform:scaleX(1.0116);transform-origin:1.00px 0;color:#191b23;letter-spacing:0.090px;">Paid Keywords</div>
<div class="t" style="left:1275.95px;top:67px;font-size:17px;color:#191b23;letter-spacing:-0.066px;">Ref. Domains</div>
<div class="t" style="left:77.46px;top:105px;font-size:30px;font-weight:bold;transform:scaleX(0.9000);transform-origin:0.00px 0;color:#008ff8;letter-spacing:0.325px;">31</div>
<div class="t" style="left:347.86px;top:105px;font-size:30px;font-weight:bold;transform:scaleX(1.1247);transform-origin:1.00px 0;color:#008ff8;letter-spacing:0.284px;">996</div>
<div class="t" style="left:657.25px;top:105px;font-size:30px;font-weight:bold;transform:scaleX(1.0079);transform-origin:1.00px 0;color:#008ff8;letter-spacing:0.288px;">2.9K</div>
<div class="t" style="left:965.48px;top:105px;font-size:30px;font-weight:bold;transform:scaleX(1.2564);transform-origin:1.00px 0;color:#008ff8;">0</div>
<div class="t" style="left:1274.86px;top:105px;font-size:30px;font-weight:bold;transform:scaleX(0.9266);transform-origin:1.00px 0;color:#008ff8;letter-spacing:0.537px;">1.9K</div>
<div class="t" style="left:114.35px;top:110px;font-size:15.3px;transform:scaleX(0.9073);transform-origin:0.00px 0;color:#6c6e79;">0</div>
<div class="t" style="left:409.54px;top:110px;font-size:15.3px;transform:scaleX(0.9056);transform-origin:0.00px 0;color:#12a47a;letter-spacing:-0.804px;">+17.18%</div>
<div class="t" style="left:726.52px;top:110px;font-size:15.3px;transform:scaleX(0.9204);transform-origin:0.00px 0;color:#ff4953;letter-spacing:-0.605px;">-17.01%</div>
<div class="t" style="left:991.53px;top:110px;font-size:15.3px;transform:scaleX(0.9188);transform-origin:0.00px 0;color:#6c6e79;letter-spacing:-1.145px;">0%</div>
<div class="t" style="left:1340.39px;top:110px;font-size:15.3px;transform:scaleX(0.9563);transform-origin:0.00px 0;color:#12a47a;letter-spacing:-0.242px;">+0.27%</div>
<div class="t" style="left:39.30px;top:144px;font-size:15px;transform:scaleX(0.9761);transform-origin:0.00px 0;color:#6c6e79;letter-spacing:-0.131px;">Semrush Rank</div>
<div class="t" style="left:158.47px;top:144px;font-size:15px;color:#006dca;letter-spacing:0.143px;">904.9K</div>
<div class="t" style="left:966.56px;top:144px;font-size:15px;transform:scaleX(1.0065);transform-origin:1.00px 0;color:#6c6e79;letter-spacing:0.133px;">Paid Traffic</div>
<div class="t" style="left:1052.63px;top:144px;font-size:15px;transform:scaleX(1.0602);transform-origin:0.00px 0;color:#006dca;">0</div>
<div class="t" style="left:1276.05px;top:144px;font-size:15px;color:#6c6e79;letter-spacing:-0.066px;">Backlinks</div>
<div class="t" style="left:1362.98px;top:144px;font-size:15px;transform:scaleX(0.9712);transform-origin:0.00px 0;color:#006dca;letter-spacing:0.060px;">6.2K</div>
<div class="t" style="left:39.43px;top:235px;font-size:19.5px;font-weight:bold;transform:scaleX(0.9906);transform-origin:0.00px 0;color:#191b23;letter-spacing:0.070px;">Site Audit</div>
<div class="t" style="left:38.80px;top:271px;font-size:17.5px;color:#6c6e79;letter-spacing:0.050px;">Updated: Fri, Jan 26, 2024</div>
<div class="t" style="left:39.00px;top:329px;font-size:17px;transform:scaleX(1.0117);transform-origin:0.00px 0;color:#191b23;letter-spacing:0.157px;">Site Health</div>
<div class="t" style="left:422.07px;top:329px;font-size:17px;transform:scaleX(1.0136);transform-origin:1.00px 0;color:#191b23;letter-spacing:0.068px;">Errors</div>
<div class="t" style="left:116.34px;top:411px;font-size:29px;font-weight:bold;transform:scaleX(1.0076);transform-origin:0.00px 0;color:#008ff8;letter-spacing:0.839px;">83%</div>
<div class="t" style="left:108.38px;top:437px;font-size:14px;transform:scaleX(1.0307);transform-origin:0.00px 0;color:#6c6e79;letter-spacing:0.302px;">no changes</div>
<div class="t" style="left:423.28px;top:363px;font-size:28.5px;font-weight:bold;transform:scaleX(1.1800);transform-origin:0.00px 0;color:#d1002f;">9</div>
<div class="t" style="left:451.86px;top:368px;font-size:15.3px;transform:scaleX(0.8645);transform-origin:0.00px 0;color:#6c6e79;">0</div>
<div class="t" style="left:38.97px;top:597px;font-size:17px;transform:scaleX(1.0096);transform-origin:0.00px 0;color:#191b23;letter-spacing:0.106px;">Crawled Pages</div>
<div class="t" style="left:37.45px;top:630px;font-size:30px;font-weight:bold;transform:scaleX(1.0689);transform-origin:1.00px 0;color:#008ff8;letter-spacing:0.640px;">100</div>
<div class="t" style="left:422.96px;top:589px;font-size:17px;transform:scaleX(1.0051);transform-origin:0.00px 0;color:#191b23;">Warnings</div>
<div class="t" style="left:422.55px;top:623px;font-size:28.5px;font-weight:bold;transform:scaleX(1.0599);transform-origin:0.00px 0;color:#ff642d;letter-spacing:0.567px;">210</div>
<div class="t" style="left:483.35px;top:628px;font-size:15.3px;transform:scaleX(0.9073);transform-origin:0.00px 0;color:#6c6e79;">0</div>
<div class="t" style="left:50.50px;top:865px;font-size:17.5px;transform:scaleX(1.0190);transform-origin:0.00px 0;-webkit-text-stroke:0.3px #505362;color:#505362;letter-spacing:0.121px;">View full report</div>
<div class="t" style="left:835.50px;top:234px;font-size:19.5px;font-weight:bold;transform:scaleX(0.9870);transform-origin:0.00px 0;color:#191b23;letter-spacing:-0.073px;">Organic Keywords</div>
<div class="t" style="left:834.57px;top:266px;font-size:17px;transform:scaleX(1.0145);transform-origin:1.00px 0;color:#6c6e79;letter-spacing:0.104px;">Dec 25, 2023 – Jan 25, 2024</div>
<div class="t" style="left:833.74px;top:297px;font-size:17.5px;transform:scaleX(0.9880);transform-origin:1.00px 0;color:#006dca;letter-spacing:-0.054px;">Root Domain</div>
<div class="t" style="left:1001.80px;top:297px;font-size:17.5px;color:#006dca;letter-spacing:0.131px;">United States</div>
<div class="t" style="left:1175.46px;top:297px;font-size:17.5px;transform:scaleX(1.0130);transform-origin:1.00px 0;color:#006dca;letter-spacing:0.162px;">Desktop</div>
<div class="t" style="left:862.47px;top:361px;font-size:16.5px;transform:scaleX(1.0383);transform-origin:1.00px 0;color:#191b23;letter-spacing:0.496px;">New</div>
<div class="t" style="left:945.67px;top:361px;font-size:16.5px;transform:scaleX(1.0306);transform-origin:1.00px 0;color:#191b23;letter-spacing:0.379px;">Improved</div>
<div class="t" style="left:1066.27px;top:361px;font-size:16.5px;transform:scaleX(1.0280);transform-origin:1.00px 0;color:#191b23;letter-spacing:0.325px;">Declined</div>
<div class="t" style="left:1182.02px;top:361px;font-size:16.5px;transform:scaleX(1.0226);transform-origin:1.00px 0;color:#191b23;letter-spacing:0.246px;">Lost</div>
<div class="t" style="left:846.71px;top:408px;font-size:14px;color:#6c6e79;letter-spacing:-0.087px;">187</div>
<div class="t" style="left:861.62px;top:482px;font-size:14px;transform:scaleX(0.9538);transform-origin:8.00px 0;color:#6c6e79;">0</div>
<div class="t" style="left:846.36px;top:546px;font-size:14px;transform:scaleX(1.0138);transform-origin:24.02px 0;color:#6c6e79;letter-spacing:0.223px;">166</div>
<div class="t" style="left:886.23px;top:569px;font-size:14px;transform:scaleX(1.0275);transform-origin:1.00px 0;color:#6c6e79;letter-spacing:0.271px;">Dec 26</div>
<div class="t" style="left:1061.15px;top:569px;font-size:14px;transform:scaleX(1.0178);transform-origin:0.00px 0;color:#6c6e79;letter-spacing:0.215px;">Jan 3</div>
<div class="t" style="left:1228.21px;top:569px;font-size:14px;transform:scaleX(0.9828);transform-origin:0.00px 0;color:#6c6e79;letter-spacing:-0.091px;">Jan 11</div>
<div class="t" style="left:1396.46px;top:569px;font-size:14px;transform:scaleX(1.0042);transform-origin:0.00px 0;color:#6c6e79;letter-spacing:0.090px;">Jan 19</div>
<div class="t" style="left:843.52px;top:629px;font-size:14px;transform:scaleX(1.0328);transform-origin:1.00px 0;color:#191b23;letter-spacing:0.270px;">Keywords</div>
<div class="t" style="left:1336.77px;top:629px;font-size:14px;transform:scaleX(1.0456);transform-origin:1.00px 0;color:#191b23;letter-spacing:0.261px;">Position</div>
<div class="t" style="left:1409.54px;top:629px;font-size:14px;transform:scaleX(1.0168);transform-origin:0.00px 0;color:#191b23;letter-spacing:0.234px;">Volume</div>
<div class="t" style="left:1479.27px;top:629px;font-size:14px;transform:scaleX(1.0409);transform-origin:0.00px 0;color:#191b23;letter-spacing:0.308px;">Traffic</div>
<div class="t" style="left:843.47px;top:670px;font-size:16px;transform:scaleX(1.0504);transform-origin:1.00px 0;color:#006dca;letter-spacing:0.380px;">marketing tools for small business</div>
<div class="t" style="left:1340.00px;top:671px;font-size:16px;color:#6e717d;">2</div>
<div class="t" style="left:1378.20px;top:671px;font-size:16px;color:#191b23;">2</div>
<div class="t" style="left:1429.98px;top:671px;font-size:16px;transform:scaleX(1.0385);transform-origin:28.50px 0;color:#191b23;letter-spacing:0.852px;">720</div>
<div class="t" style="left:1497.38px;top:671px;font-size:16px;transform:scaleX(1.0139);transform-origin:46.09px 0;color:#191b23;letter-spacing:0.237px;">9.53%</div>
<div class="t" style="left:843.47px;top:713px;font-size:16px;transform:scaleX(1.0563);transform-origin:1.00px 0;color:#006dca;letter-spacing:0.391px;">lifelock vs experian</div>
<div class="t" style="left:1340.00px;top:715px;font-size:16px;color:#6e717d;">1</div>
<div class="t" style="left:1378.20px;top:715px;font-size:16px;color:#191b23;">1</div>
<div class="t" style="left:1429.59px;top:715px;font-size:16px;transform:scaleX(1.0474);transform-origin:28.84px 0;color:#191b23;letter-spacing:1.021px;">320</div>
<div class="t" style="left:1497.97px;top:715px;font-size:16px;transform:scaleX(0.9929);transform-origin:45.20px 0;color:#191b23;letter-spacing:0.014px;">7.93%</div>
<div class="t" style="left:843.33px;top:757px;font-size:16px;transform:scaleX(1.0578);transform-origin:0.00px 0;color:#006dca;letter-spacing:0.455px;">sales productivity tools</div>
<div class="t" style="left:1340.00px;top:757px;font-size:16px;color:#6e717d;">1</div>
<div class="t" style="left:1378.20px;top:757px;font-size:16px;color:#191b23;">1</div>
<div class="t" style="left:1431.37px;top:757px;font-size:16px;color:#191b23;letter-spacing:0.214px;">210</div>
<div class="t" style="left:1497.48px;top:757px;font-size:16px;transform:scaleX(1.0051);transform-origin:45.63px 0;color:#191b23;letter-spacing:0.123px;">5.22%</div>
<div class="t" style="left:843.61px;top:799px;font-size:16px;transform:scaleX(1.0529);transform-origin:0.00px 0;color:#006dca;letter-spacing:0.399px;">digital marketing software for small business</div>
<div class="t" style="left:1340.00px;top:801px;font-size:16px;color:#6e717d;">1</div>
<div class="t" style="left:1378.20px;top:801px;font-size:16px;color:#191b23;">1</div>
<div class="t" style="left:1431.39px;top:801px;font-size:16px;transform:scaleX(1.0154);transform-origin:26.98px 0;color:#191b23;letter-spacing:0.094px;">170</div>
<div class="t" style="left:1498.83px;top:801px;font-size:16px;transform:scaleX(0.9839);transform-origin:44.40px 0;color:#191b23;letter-spacing:-0.186px;">4.21%</div>
<div class="t" style="left:845.40px;top:865px;font-size:17.5px;transform:scaleX(1.0190);transform-origin:0.00px 0;-webkit-text-stroke:0.3px #505362;color:#505362;letter-spacing:0.121px;">View full report</div>
<div class="t" style="left:40.48px;top:960px;font-size:19.5px;font-weight:bold;color:#191b23;letter-spacing:0.101px;">Traffic Analytics</div>
<div class="t" style="left:268.19px;top:961px;font-size:17.5px;transform:scaleX(0.9860);transform-origin:0.00px 0;color:#191b23;letter-spacing:-0.103px;">Semrush Data</div>
<div class="t" style="left:426.56px;top:961px;font-size:17.5px;transform:scaleX(0.9892);transform-origin:0.00px 0;color:#191b23;letter-spacing:-0.078px;">Google Data</div>
<div class="t" style="left:1142.25px;top:962px;font-size:18px;transform:scaleX(0.9759);transform-origin:0.00px 0;color:#6c6e79;letter-spacing:-0.216px;">Scope: Root Domain</div>
<div class="t" style="left:1321.23px;top:962px;font-size:18px;transform:scaleX(0.9940);transform-origin:1.00px 0;color:#6c6e79;letter-spacing:-0.037px;">Historical data: Dec 2023</div>
</body></html>
